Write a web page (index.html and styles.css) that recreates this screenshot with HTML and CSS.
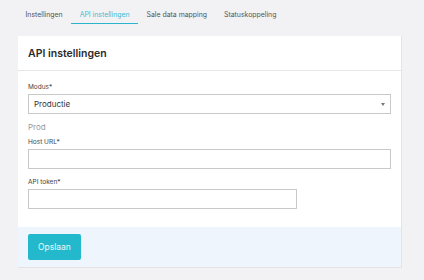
FILE: index.html
```html
<!DOCTYPE html>
<html lang="nl">
<head>
  <meta charset="UTF-8" />
  <title>API instellingen</title>
  <link rel="stylesheet" href="styles.css">
</head>
<body>
  <nav class="tabs">
    <a class="tab">Instellingen</a>
    <a class="tab active">API instellingen</a>
    <a class="tab">Sale data mapping</a>
    <a class="tab">Statuskoppeling</a>
  </nav>

  <div class="card">
    <div class="card-header">API instellingen</div>
    <div class="card-body">
      <label class="label">Modus*</label>
      <div class="select">
        <span>Productie</span>
        <span class="caret"></span>
      </div>
      <div class="hint">Prod</div>

      <label class="label">Host URL*</label>
      <div class="input"></div>

      <label class="label label-gap">API token*</label>
      <div class="input short"></div>
    </div>
    <div class="card-footer">
      <button class="btn">Opslaan</button>
    </div>
  </div>
</body>
</html>
```

FILE: styles.css
```css
body {
  margin: 0;
  background: #f2f2f4;
  font-family: Inter, "Noto Sans", sans-serif;
  color: #333;
}

.tabs {
  display: flex;
  padding: 8px 0 0 17px;
  height: 16px;
}

.tab {
  font-size: 6.9px;
  color: #555;
  padding: 0 8.5px;
  height: 15px;
  line-height: 14px;
}

.tab.active {
  color: #3bbdd2;
  border-bottom: 1px solid #29b6cc;
}

.card {
  margin: 12px 22px 0 18px;
  background: #fff;
  border-right: 1px solid #e4e4e6;
  border-bottom: 1px solid #e4e4e6;
}

.card-header {
  height: 34px;
  line-height: 36px;
  padding-left: 10px;
  font-size: 10.5px;
  font-weight: 600;
  color: #2a2a2a;
  border-bottom: 1px solid #e6e6e6;
}

.card-body {
  padding: 12px 10px 18px 10px;
}

.label {
  display: block;
  font-size: 6.5px;
  line-height: 8px;
  color: #444;
  margin-bottom: 3px;
}

.label-gap {
  margin-top: 9px;
}

.select, .input {
  box-sizing: border-box;
  height: 20px;
  border: 1px solid #c9c9c9;
  background: #fff;
}

.select {
  display: flex;
  align-items: center;
  justify-content: space-between;
  padding: 0 5px 0 5px;
  font-size: 8px;
  color: #333;
}

.caret {
  width: 0;
  height: 0;
  border-left: 2.5px solid transparent;
  border-right: 2.5px solid transparent;
  border-top: 3px solid #777;
}

.input.short {
  width: 269px;
}

.hint {
  font-size: 8px;
  line-height: 10px;
  color: #999;
  margin: 8px 0 6px 0;
}

.card-footer {
  background: #eef5fc;
  padding: 7px 10px;
  height: 26px;
}

.btn {
  display: block;
  font-family: Inter, "Noto Sans", sans-serif;
  background: #24b8cd;
  color: #e8f8fb;
  border: none;
  border-radius: 2px;
  width: 53px;
  height: 26px;
  font-size: 8.5px;
  padding: 0;
}
```
